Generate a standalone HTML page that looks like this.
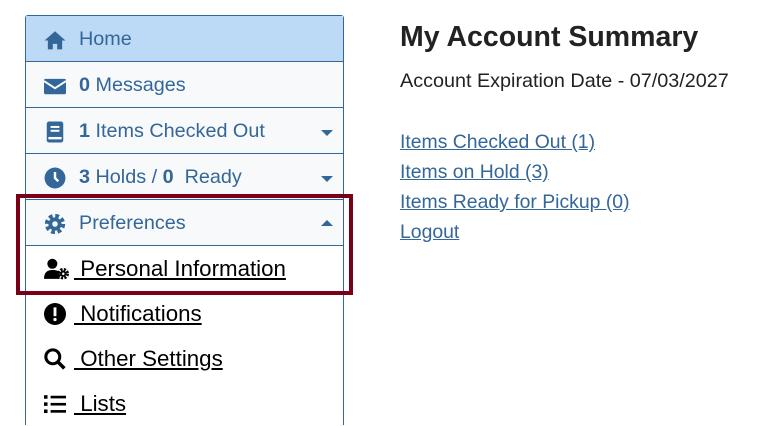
<!DOCTYPE html>
<html><head><style>
body{margin:0;width:762px;height:426px;background:#fff;font-family:"Liberation Sans",sans-serif;position:relative;overflow:hidden}
.panel{position:absolute;left:25px;top:15px;width:319px;height:410px;border:1px solid #336699;border-radius:3px 3px 0 0;box-sizing:border-box}
.row{position:absolute;left:0;width:100%;box-sizing:border-box;color:#336699;font-size:19.8px}
.hd{height:46px;background:#f7f9fb;border-bottom:1px solid #336699}
.row .ic{position:absolute;left:18px;top:13px;width:22px;height:22px}
.row .t{position:absolute;left:53px;top:12px;white-space:nowrap}
.caret{position:absolute;right:10px;top:22px;width:0;height:0;border-left:6px solid transparent;border-right:6px solid transparent;border-top:6px solid #336699}
.up{border-top:none;border-bottom:6px solid #336699;top:20px}
.sub{height:45px;background:#fff;color:#000;font-size:22.3px}
.sub .t{left:48px;top:10px;text-decoration:underline}
.sub .ic{left:18px;top:12px}
.red{position:absolute;left:16px;top:194px;width:337px;height:101px;border:4px solid #7a0019;box-sizing:border-box}
h1{position:absolute;left:400px;top:21px;margin:0;font-size:28.5px;font-weight:bold;color:#222}
.exp{position:absolute;left:400px;top:70px;font-size:19.8px;color:#222}
.lk{position:absolute;left:400px;font-size:19.4px;color:#336699;text-decoration:underline}
</style></head><body>
<div class="panel">
 <div class="row hd" style="top:0;height:46px;background:#bcdaf6">
  <svg class="ic" viewBox="0 0 20 20"><path d="M10 2L0.5 10.5h3v8h4.5v-5h4v5h4.5v-8h3z" fill="#336699"/></svg>
  <span class="t">Home</span></div>
 <div class="row hd" style="top:46px">
  <svg class="ic" viewBox="0 0 20 20"><rect x="0" y="3.5" width="20" height="14" rx="1.5" fill="#336699"/><path d="M0 5.5l10 6.5 10-6.5" stroke="#f7f9fb" stroke-width="1.8" fill="none"/></svg>
  <span class="t"><b>0</b> Messages</span></div>
 <div class="row hd" style="top:92px">
  <svg class="ic" viewBox="0 0 20 20"><rect x="2.5" y="0.5" width="15" height="19" rx="2" fill="#336699"/><rect x="6" y="4.5" width="8" height="1.8" fill="#fff"/><rect x="6" y="8" width="8" height="1.8" fill="#fff"/><rect x="4" y="14.5" width="12" height="2.2" fill="#fff"/></svg>
  <span class="t"><b>1</b> Items Checked Out</span><div class="caret"></div></div>
 <div class="row hd" style="top:138px">
  <svg class="ic" viewBox="0 0 20 20"><circle cx="10" cy="10" r="9.5" fill="#336699"/><path d="M10 4.5v5.5l3 3" stroke="#fff" stroke-width="2.2" fill="none"/></svg>
  <span class="t"><b>3</b> Holds / <b>0</b>&nbsp; Ready</span><div class="caret"></div></div>
 <div class="row hd" style="top:184px">
  <svg class="ic" viewBox="0 0 20 20"><circle cx="10" cy="10" r="7" fill="none" stroke="#336699" stroke-width="4.5" stroke-dasharray="3.2 2.3"/><circle cx="10" cy="10" r="6" fill="#336699"/><circle cx="10" cy="10" r="2.5" fill="#f7f9fb"/></svg>
  <span class="t">Preferences</span><div class="caret up"></div></div>
 <div class="row sub" style="top:230px">
  <svg class="ic" viewBox="0 0 24 20" style="width:25px"><circle cx="8" cy="5" r="4.8"/><path d="M0 19.5c0-6 3-8.5 8-8.5s6 1 7 3v5.5z"/><circle cx="18.5" cy="14.5" r="4" fill="none" stroke="#000" stroke-width="3" stroke-dasharray="2 1.2"/><circle cx="18.5" cy="14.5" r="3"/><circle cx="18.5" cy="14.5" r="1.2" fill="#fff"/></svg>
  <span class="t">&nbsp;Personal Information</span></div>
 <div class="row sub" style="top:275px">
  <svg class="ic" viewBox="0 0 20 20"><circle cx="10" cy="10" r="10"/><rect x="8.7" y="4" width="2.6" height="8" fill="#fff"/><circle cx="10" cy="15" r="1.5" fill="#fff"/></svg>
  <span class="t">&nbsp;Notifications</span></div>
 <div class="row sub" style="top:320px">
  <svg class="ic" viewBox="0 0 20 20"><circle cx="8" cy="8" r="6.3" fill="none" stroke="#000" stroke-width="2.8"/><path d="M12.5 12.5l6 6" stroke="#000" stroke-width="3.2"/></svg>
  <span class="t">&nbsp;Other Settings</span></div>
 <div class="row sub" style="top:365px">
  <svg class="ic" viewBox="0 0 20 20"><rect x="0" y="2" width="3.2" height="3.2"/><rect x="0" y="8.5" width="3.2" height="3.2"/><rect x="0" y="15" width="3.2" height="3.2"/><rect x="6" y="2.5" width="14" height="2.4"/><rect x="6" y="9" width="14" height="2.4"/><rect x="6" y="15.5" width="14" height="2.4"/></svg>
  <span class="t">&nbsp;Lists</span></div>
</div>
<div class="red"></div>
<h1>My Account Summary</h1>
<div class="exp">Account Expiration Date - 07/03/2027</div>
<div class="lk" style="top:131px">Items Checked Out (1)</div>
<div class="lk" style="top:161px">Items on Hold (3)</div>
<div class="lk" style="top:191px">Items Ready for Pickup (0)</div>
<div class="lk" style="top:221px">Logout</div>
</body></html>
